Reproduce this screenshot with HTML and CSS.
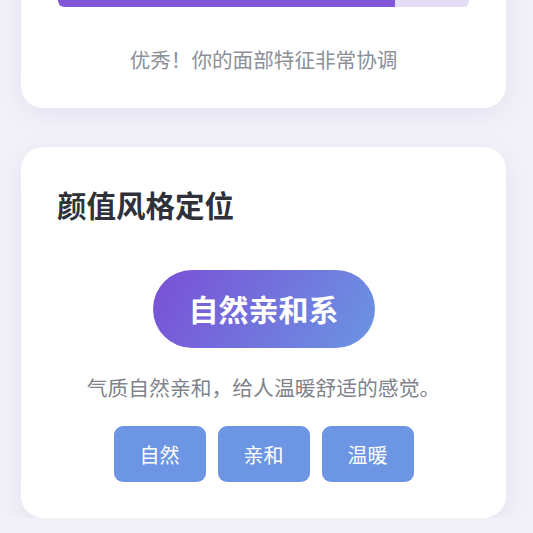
FILE: index.html
```html
<!DOCTYPE html>
<html lang="zh-CN">
<head>
<meta charset="utf-8">
<link rel="stylesheet" href="styles.css">
</head>
<body>
<div class="page">
  <section class="card score-card">
    <div class="bar"><div class="bar-fill" style="width:82%"></div></div>
    <p class="score-note">优秀！你的面部特征非常协调</p>
  </section>
  <section class="card style-card">
    <h2 class="card-title">颜值风格定位</h2>
    <div class="badge-wrap"><span class="badge">自然亲和系</span></div>
    <p class="desc">气质自然亲和，给人温暖舒适的感觉。</p>
    <div class="tags">
      <span class="tag">自然</span>
      <span class="tag">亲和</span>
      <span class="tag">温暖</span>
    </div>
  </section>
</div>
</body>
</html>
```
FILE: styles.css
```css
* { box-sizing: border-box; }
html, body {
  margin: 0;
  padding: 0;
  background: #f2f1f8;
  font-family: "Noto Sans CJK SC", "Noto Sans", sans-serif;
}
.page {
  margin-top: -55px;
  padding: 0 27px 0 21px;
  display: flex;
  flex-direction: column;
  gap: 39px;
}
.card {
  background: #ffffff;
  border-radius: 22px;
  box-shadow: 0 6px 24px rgba(110, 100, 190, 0.10);
}
.score-card {
  padding: 50px 37px 34px 37px;
}
.bar {
  height: 12px;
  border-radius: 6px;
  background: #e5ddf6;
  overflow: hidden;
}
.bar-fill {
  height: 100%;
  background: #8256d8;
  border-radius: 6px 0 0 6px;
}
.score-note {
  margin: 37px 0 0;
  text-align: center;
  font-size: 20.6px;
  line-height: 30px;
  color: #8c9099;
}
.style-card {
  padding: 40px 36px 36px 36px;
}
.card-title {
  margin: 0;
  font-size: 29.5px;
  line-height: 35px;
  font-weight: 700;
  color: #2e3139;
}
.badge-wrap {
  margin-top: 48px;
  display: flex;
  justify-content: center;
}
.badge {
  display: inline-block;
  padding: 21px 36px 22px;
  border-radius: 40px;
  background: linear-gradient(120deg, #7a4fd6 0%, #6b95e3 100%);
  color: #ffffff;
  font-size: 30px;
  line-height: 35px;
  font-weight: 700;
}
.desc {
  margin: 24px 0 0;
  text-align: center;
  font-size: 20.8px;
  line-height: 30px;
  color: #7f838c;
}
.tags {
  margin-top: 24px;
  display: flex;
  justify-content: center;
  gap: 12px;
}
.tag {
  width: 92px;
  height: 56px;
  display: flex;
  align-items: center;
  justify-content: center;
  border-radius: 9px;
  background: #6c96e4;
  color: #ffffff;
  font-size: 20px;
}
```
